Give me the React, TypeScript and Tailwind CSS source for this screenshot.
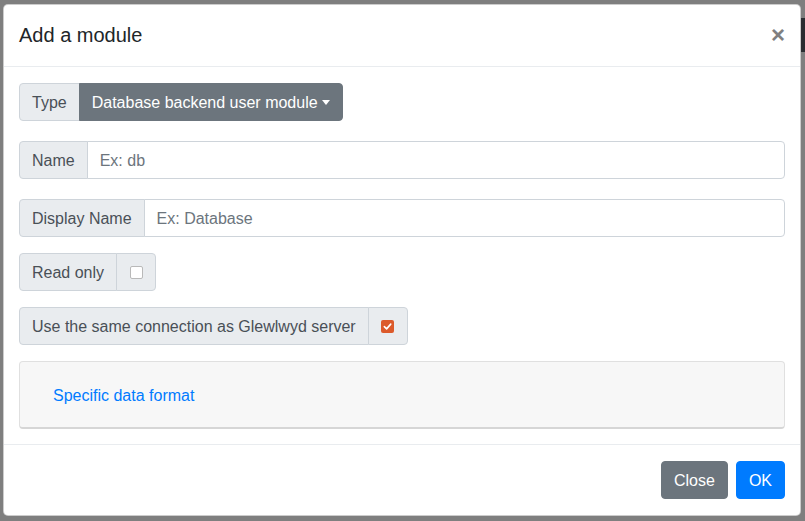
import React from "react";

function Addon({ children, className = "" }: { children: React.ReactNode; className?: string }) {
  return (
    <span
      className={
        "flex items-center h-[38px] px-3 pt-[2px] bg-[#e9ecef] border border-[#ced4da] text-[#495057] text-base leading-6 whitespace-nowrap " +
        className
      }
    >
      {children}
    </span>
  );
}

function TextRow({ label, placeholder }: { label: string; placeholder: string }) {
  return (
    <div className="flex w-full">
      <Addon className="rounded-l">{label}</Addon>
      <input
        className="flex-1 h-[38px] -ml-px px-3 pt-[2px] border border-[#ced4da] rounded-r bg-white text-base text-[#495057] placeholder:text-[#6c757d] outline-none"
        placeholder={placeholder}
      />
    </div>
  );
}

function CheckRow({ label, checked }: { label: string; checked?: boolean }) {
  return (
    <div className="flex">
      <Addon className="rounded-l">{label}</Addon>
      <span className="flex items-center justify-center w-[40px] h-[38px] -ml-px bg-[#e9ecef] border border-[#ced4da] rounded-r">
        {checked ? (
          <span className="flex items-center justify-center w-[13px] h-[13px] rounded-[2px] bg-[#dc5a2b]">
            <svg width="9" height="9" viewBox="0 0 10 10" fill="none">
              <path d="M1.5 5.2 L4 7.6 L8.6 2.4" stroke="white" strokeWidth="1.8" strokeLinecap="round" strokeLinejoin="round" />
            </svg>
          </span>
        ) : (
          <span className="w-[13px] h-[13px] rounded-[2px] bg-white border border-[#b9b9b9]" />
        )}
      </span>
    </div>
  );
}

export default function App() {
  return (
    <div className="relative w-[805px] h-[521px] overflow-hidden bg-[#7f7f7f] font-['Liberation_Sans',Arial,sans-serif] pt-[4px] pl-[3px]">
      {/* dimmed page behind */}
      <div className="absolute right-0 top-[18px] w-[4px] h-[34px] bg-[#2a2d31]" />

      <div className="relative w-[798px] h-[512px] bg-white rounded-[5px] border border-[rgba(0,0,0,0.2)] flex flex-col">
        <header className="flex items-center justify-between h-[62px] px-[15px] border-b border-[#e9ecef]">
          <h5 className="text-[20px] leading-[30px] text-[#212529] mt-[-1px]">Add a module</h5>
          <button className="text-[24px] leading-none font-bold text-[#808080] -mt-[2px]">×</button>
        </header>

        <div className="flex flex-col p-[15px] pt-[16px]">
          <div className="flex">
            <Addon className="rounded-l">Type</Addon>
            <button className="flex items-center h-[38px] -ml-px px-3 pt-[2px] bg-[#6c757d] text-white text-base rounded-r border border-[#6c757d]">
              Database backend user module
              <span className="ml-[4px] mt-[-2px] border-t-[5px] border-t-white border-x-[4px] border-x-transparent" />
            </button>
          </div>

          <div className="mt-[20px]">
            <TextRow label="Name" placeholder="Ex: db" />
          </div>
          <div className="mt-[20px]">
            <TextRow label="Display Name" placeholder="Ex: Database" />
          </div>
          <div className="mt-[16px]">
            <CheckRow label="Read only" />
          </div>
          <div className="mt-[16px]">
            <CheckRow label="Use the same connection as Glewlwyd server" checked />
          </div>

          <div className="mt-[16px] h-[68px] rounded border border-[#e0e0e0] border-b-[#d6d6d6] border-b-2 bg-[#f7f7f7] flex items-center px-[21px] pt-[3px]">
            <button className="px-3 h-[38px] text-base text-[#007bff]">Specific data format</button>
          </div>
        </div>

        <footer className="mt-auto flex items-center justify-end gap-[8px] h-[71px] px-[15px] border-t border-[#e9ecef]">
          <button className="h-[38px] px-3 pt-[2px] rounded border border-[#6c757d] bg-[#6c757d] text-white text-base">Close</button>
          <button className="h-[38px] px-3 pt-[2px] rounded border border-[#007bff] bg-[#007bff] text-white text-base">OK</button>
        </footer>
      </div>
    </div>
  );
}
